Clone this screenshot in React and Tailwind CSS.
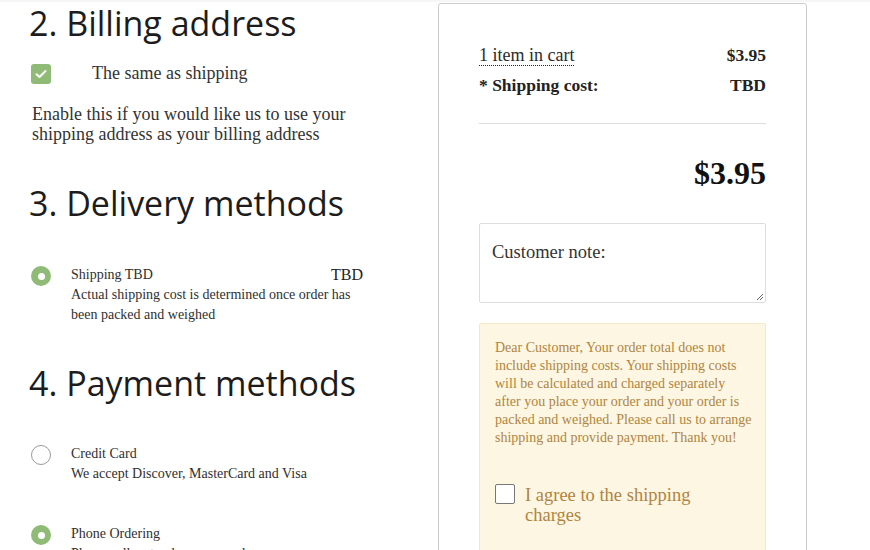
import React from "react";

const serif = { fontFamily: '"Liberation Serif", "Times New Roman", serif' };
const heading = { fontFamily: '"Open Sans", "DejaVu Sans", sans-serif' };

function GreenRadio() {
  return (
    <div className="w-[20px] h-[20px] rounded-full bg-[#8fbb76] flex items-center justify-center shrink-0">
      <div className="w-[7px] h-[7px] rounded-full bg-white" />
    </div>
  );
}

function EmptyRadio() {
  return <div className="w-[20px] h-[20px] rounded-full border border-[#9a9a9a] bg-white shrink-0" />;
}

function Method({ checked, title, price, desc }) {
  return (
    <div className="flex items-start">
      <div className="pt-[1px]">{checked ? <GreenRadio /> : <EmptyRadio />}</div>
      <div className="ml-[20px] w-[292px] text-[14px] leading-[20px] text-[#2f2f2f]" style={serif}>
        <div className="flex justify-between items-center">
          <span>{title}</span>
          {price && <span className="text-[16px] text-[#222]">{price}</span>}
        </div>
        {desc && <div>{desc}</div>}
      </div>
    </div>
  );
}

const noteLines = [
  "Dear Customer, Your order total does not",
  "include shipping costs. Your shipping costs",
  "will be calculated and charged separately",
  "after you place your order and your order is",
  "packed and weighed. Please call us to arrange",
  "shipping and provide payment. Thank you!",
];

export default function App() {
  return (
    <div className="w-[870px] h-[550px] overflow-hidden bg-white border-t-2 border-[#f6f6f6] flex">
      <div className="w-[438px] pl-[29px] shrink-0">
        <h2 className="text-[34px] leading-[40px] text-[#1c1c1c] mt-[1px]" style={heading}>
          2. Billing address
        </h2>
        <div className="flex items-center mt-[17px] ml-[2px]">
          <div className="w-[20px] h-[20px] rounded-[3px] bg-[#8fbb76] flex items-center justify-center">
            <svg width="12" height="10" viewBox="0 0 12 10" fill="none">
              <path d="M1.5 5.2 L4.5 8 L10.5 2" stroke="white" strokeWidth="2" strokeLinecap="round" strokeLinejoin="round" />
            </svg>
          </div>
          <span className="ml-[41px] text-[18px] text-[#333]" style={serif}>The same as shipping</span>
        </div>
        <p className="mt-[17px] ml-[3px] w-[350px] text-[18px] leading-[20px] text-[#333]" style={serif}>
          Enable this if you would like us to use your shipping address as your billing address
        </p>
        <h2 className="text-[34px] leading-[40px] text-[#1c1c1c] mt-[39px]" style={heading}>
          3. Delivery methods
        </h2>
        <div className="mt-[42px] ml-[2px]">
          <Method
            checked
            title="Shipping TBD"
            price="TBD"
            desc="Actual shipping cost is determined once order has been packed and weighed"
          />
        </div>
        <h2 className="text-[34px] leading-[40px] text-[#1c1c1c] mt-[38px]" style={heading}>
          4. Payment methods
        </h2>
        <div className="mt-[41px] ml-[2px] flex flex-col gap-[40px]">
          <Method title="Credit Card" desc="We accept Discover, MasterCard and Visa" />
          <Method checked title="Phone Ordering" desc="Please call us to place your order" />
        </div>
      </div>

      <div className="w-[369px] mt-[1px] border border-[#cccccc] rounded-[3px] px-[40px] pt-[39px] shrink-0 self-start h-[600px]" style={serif}>
        <div className="flex justify-between items-center text-[18px] leading-[24px]">
          <span className="text-[#2b2b2b] border-b border-dotted border-[#222] leading-[20px]">1 item in cart</span>
          <span className="font-bold text-[17.5px] text-[#222]">$3.95</span>
        </div>
        <div className="flex justify-between items-center mt-[6px] text-[17.5px] leading-[24px] font-bold text-[#222]">
          <span>* Shipping cost:</span>
          <span>TBD</span>
        </div>
        <div className="mt-[26px] border-t border-[#dddddd]" />
        <div className="mt-[31px] text-right text-[32px] leading-[36px] font-bold text-[#111]">$3.95</div>
        <div className="mt-[32px] relative h-[80px] border border-[#dddddd] rounded-[2px] px-[12px] pt-[15px] text-[18.5px] text-[#333]">
          Customer note:
          <svg className="absolute right-[1px] bottom-[1px]" width="8" height="8" viewBox="0 0 8 8">
            <path d="M7 1 L1 7 M7 4 L4 7" stroke="#666" strokeWidth="1" />
          </svg>
        </div>
        <div className="mt-[20px] bg-[#fcf6e2] border border-[#f3e8c8] rounded-[2px] px-[15px] pt-[15px] h-[260px]">
          <div className="text-[14px] leading-[18px] text-[#b1843f]">
            {noteLines.map((l) => (
              <div key={l} className="whitespace-nowrap">{l}</div>
            ))}
          </div>
          <div className="flex items-start mt-[37px]">
            <div className="w-[20px] h-[20px] border border-[#777] rounded-[2px] bg-white shrink-0" />
            <span className="ml-[10px] pt-[1px] text-[18.5px] leading-[20px] text-[#b1843f] w-[200px]">I agree to the shipping charges</span>
          </div>
        </div>
      </div>
    </div>
  );
}
